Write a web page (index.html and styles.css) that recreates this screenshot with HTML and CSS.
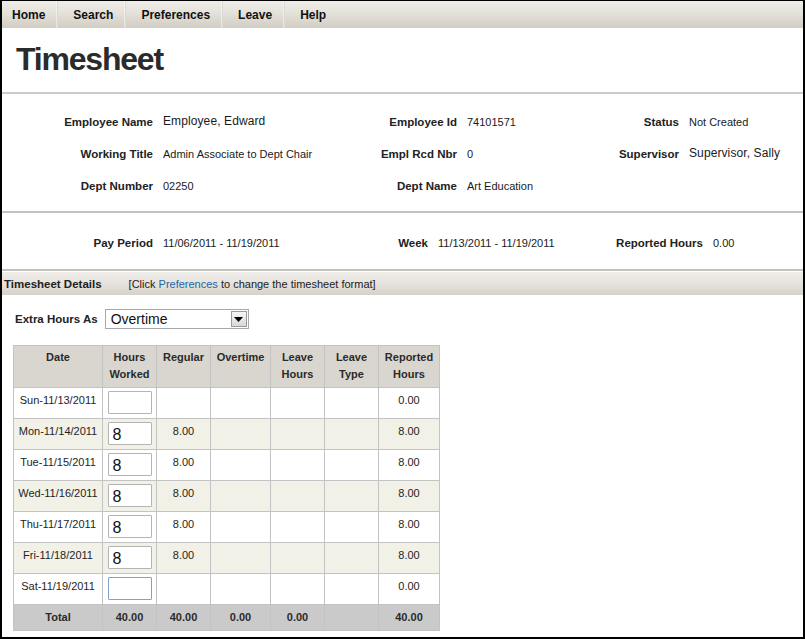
FILE: index.html
```html
<!DOCTYPE html>
<html lang="en">
<head>
<meta charset="utf-8">
<title>Timesheet</title>
<link rel="stylesheet" href="styles.css">
</head>
<body>
<div class="page">
  <nav class="topnav">
    <a class="nav-item first">Home</a>
    <a class="nav-item">Search</a>
    <a class="nav-item">Preferences</a>
    <a class="nav-item">Leave</a>
    <a class="nav-item last">Help</a>
  </nav>

  <header class="title-block">
    <h1 class="title">Timesheet</h1>
  </header>

  <section class="info info-main">
    <div class="lbl">Employee Name</div><div class="val big">Employee, Edward</div>
    <div class="lbl">Employee Id</div><div class="val">74101571</div>
    <div class="lbl">Status</div><div class="val">Not Created</div>

    <div class="lbl">Working Title</div><div class="val">Admin Associate to Dept Chair</div>
    <div class="lbl">Empl Rcd Nbr</div><div class="val">0</div>
    <div class="lbl">Supervisor</div><div class="val big">Supervisor, Sally</div>

    <div class="lbl">Dept Number</div><div class="val">02250</div>
    <div class="lbl">Dept Name</div><div class="val">Art Education</div>
    <div class="lbl"></div><div class="val"></div>
  </section>

  <section class="info info-period">
    <div class="lbl">Pay Period</div><div class="val">11/06/2011 - 11/19/2011</div>
    <div class="lbl">Week</div><div class="val">11/13/2011 - 11/19/2011</div>
    <div class="lbl">Reported Hours</div><div class="val">0.00</div>
  </section>

  <div class="details-bar">
    <span class="details-title">Timesheet Details</span>
    <span class="details-note">[Click <a class="link">Preferences</a> to change the timesheet format]</span>
  </div>

  <div class="extra-row">
    <span class="extra-label">Extra Hours As</span>
    <div class="select">
      <span class="select-text">Overtime</span>
      <span class="select-btn">
        <svg width="9" height="5" viewBox="0 0 9 5"><path d="M0 0H9L4.5 5Z" fill="#000"/></svg>
      </span>
    </div>
  </div>

  <table class="ts">
    <colgroup>
      <col class="c-date"><col class="c-worked"><col class="c-reg"><col class="c-ot"><col class="c-lh"><col class="c-lt"><col class="c-rep">
    </colgroup>
    <thead>
      <tr>
        <th>Date</th><th>Hours<br>Worked</th><th>Regular</th><th>Overtime</th><th>Leave<br>Hours</th><th>Leave<br>Type</th><th>Reported<br>Hours</th>
      </tr>
    </thead>
    <tbody>
      <tr>
        <td>Sun-11/13/2011</td><td class="in"><input class="hrs" type="text" value=""></td><td></td><td></td><td></td><td></td><td>0.00</td>
      </tr>
      <tr class="alt">
        <td>Mon-11/14/2011</td><td class="in"><input class="hrs" type="text" value="8"></td><td>8.00</td><td></td><td></td><td></td><td>8.00</td>
      </tr>
      <tr>
        <td>Tue-11/15/2011</td><td class="in"><input class="hrs" type="text" value="8"></td><td>8.00</td><td></td><td></td><td></td><td>8.00</td>
      </tr>
      <tr class="alt">
        <td>Wed-11/16/2011</td><td class="in"><input class="hrs" type="text" value="8"></td><td>8.00</td><td></td><td></td><td></td><td>8.00</td>
      </tr>
      <tr>
        <td>Thu-11/17/2011</td><td class="in"><input class="hrs" type="text" value="8"></td><td>8.00</td><td></td><td></td><td></td><td>8.00</td>
      </tr>
      <tr class="alt">
        <td>Fri-11/18/2011</td><td class="in"><input class="hrs" type="text" value="8"></td><td>8.00</td><td></td><td></td><td></td><td>8.00</td>
      </tr>
      <tr>
        <td>Sat-11/19/2011</td><td class="in"><input class="hrs focused" type="text" value=""></td><td></td><td></td><td></td><td></td><td>0.00</td>
      </tr>
    </tbody>
    <tfoot>
      <tr class="total">
        <td>Total</td><td>40.00</td><td>40.00</td><td>0.00</td><td>0.00</td><td></td><td>40.00</td>
      </tr>
    </tfoot>
  </table>
</div>
</body>
</html>
```

FILE: styles.css
```css
* { box-sizing: border-box; }

html, body {
  margin: 0;
  padding: 0;
  background: #ffffff;
}

body {
  font-family: "Liberation Sans", Arial, sans-serif;
  color: #222222;
}

.page {
  width: 805px;
  height: 639px;
  border-style: solid;
  border-color: #000000;
  border-width: 1px 2px 2px 2px;
  background: #ffffff;
  overflow: hidden;
}

/* ---------- top navigation ---------- */
.topnav {
  display: flex;
  height: 27px;
  background: linear-gradient(to bottom, #efede8 0%, #e4e1da 45%, #d1cdc3 100%);
}

.nav-item {
  display: flex;
  align-items: center;
  padding: 1px 12px 0 15px;
  font-size: 12px;
  font-weight: bold;
  color: #111111;
  text-decoration: none;
  border-right: 1px solid #dcd9d2;
  box-shadow: inset -1px 0 0 rgba(255, 255, 255, 0.45);
}

.nav-item.first { padding-left: 10px; }
.nav-item.last { border-right: none; box-shadow: none; }

/* ---------- title ---------- */
.title-block {
  height: 66px;
  padding: 13px 0 0 14px;
  border-bottom: 2px solid #cfcbc4;
}

.title {
  margin: 0;
  font-size: 32px;
  line-height: 36px;
  font-weight: bold;
  letter-spacing: -1.2px;
  color: #2b2b2b;
}

/* ---------- info grids ---------- */
.info {
  display: grid;
  column-gap: 10px;
  align-items: center;
  border-bottom: 2px solid #c5c1ba;
}

.info-main {
  grid-template-columns: 151px 190px 94px 110px 92px 1fr;
  grid-auto-rows: 32px;
  padding: 12px 0 9px;
}

.info-period {
  grid-template-columns: 151px 180px 75px 165px 90px 1fr;
  grid-auto-rows: 32px;
  padding: 14px 0 10px;
}

.lbl {
  text-align: right;
  font-size: 11.5px;
  font-weight: bold;
  color: #222222;
  white-space: nowrap;
}

.val {
  font-size: 11px;
  color: #1a1a1a;
  white-space: nowrap;
}

.val.big {
  font-size: 12px;
  margin-top: -3px;
  letter-spacing: 0.1px;
}

/* ---------- details bar ---------- */
.details-bar {
  display: flex;
  align-items: center;
  height: 23px;
  margin-top: 1px;
  padding-left: 2px;
  background: linear-gradient(to bottom, #f0eeea 0%, #e6e3dd 50%, #d6d2c9 100%);
}

.details-title {
  font-size: 11.5px;
  font-weight: bold;
  color: #222222;
}

.details-note {
  margin-left: 27px;
  font-size: 11px;
  color: #222222;
}

.link {
  color: #2266aa;
  text-decoration: none;
}

/* ---------- extra hours ---------- */
.extra-row {
  display: flex;
  align-items: center;
  gap: 7px;
  margin-top: 14px;
  padding-left: 13px;
}

.extra-label {
  font-size: 11.5px;
  font-weight: bold;
  color: #222222;
}

.select {
  display: flex;
  align-items: center;
  justify-content: space-between;
  width: 144px;
  height: 20px;
  border: 1px solid #a4a9ae;
  background: #ffffff;
  padding: 0 1px 0 5px;
}

.select-text {
  font-size: 14px;
  color: #111111;
}

.select-btn {
  display: flex;
  align-items: center;
  justify-content: center;
  width: 16px;
  height: 16px;
  border: 1px solid #9a9a9a;
  background: linear-gradient(to bottom, #f6f6f6, #d8d8d8);
}

/* ---------- timesheet table ---------- */
.ts {
  margin: 16px 0 0 11px;
  border-collapse: collapse;
  table-layout: fixed;
  width: 427px;
  font-size: 11px;
  color: #1e1e1e;
}

.c-date { width: 89px; }
.c-worked { width: 54px; }
.c-reg { width: 54px; }
.c-ot { width: 60px; }
.c-lh { width: 54px; }
.c-lt { width: 54px; }
.c-rep { width: 61px; }

.ts th,
.ts td {
  border: 1px solid #c3c3c3;
  text-align: center;
  vertical-align: top;
  padding: 0;
}

.ts thead tr { height: 42px; }

.ts th {
  background: #d9d6cf;
  font-weight: bold;
  line-height: 17px;
  padding-top: 3px;
  color: #2a2a2a;
}

.ts tbody tr { height: 31px; }

.ts tbody td {
  line-height: 14px;
  padding-top: 5px;
}

.ts tbody td.in { padding-top: 3px; }

.ts tbody tr.alt td { background: #f2f1e7; }

.hrs {
  display: block;
  margin: 0 auto;
  width: 44px;
  height: 23px;
  border: 1px solid #b4b4b4;
  border-radius: 1px;
  padding: 3px 4px 0;
  font-family: "Liberation Sans", Arial, sans-serif;
  font-size: 16px;
  color: #111111;
  background: #ffffff;
  outline: none;
}

.hrs.focused { border-color: #7ea3cf; }

.ts tfoot tr { height: 26px; }

.ts tfoot td {
  background: #cacaca;
  font-weight: bold;
  line-height: 14px;
  padding-top: 5px;
  color: #2a2a2a;
}
```
